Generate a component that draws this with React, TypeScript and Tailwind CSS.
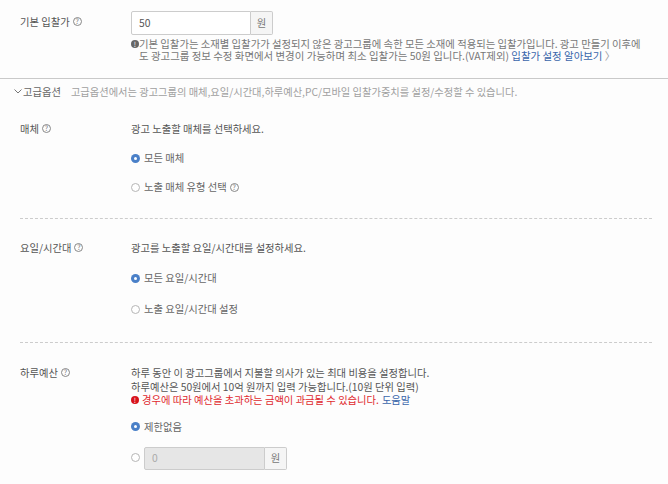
import React from 'react';

const Help = () => (
  <span className="inline-flex items-center justify-center w-[9px] h-[9px] rounded-full border border-[#888] text-[7px] leading-none text-[#777] ml-[3px] shrink-0">?</span>
);

const Radio = ({ checked, label, help }: { checked?: boolean; label?: string; help?: boolean }) => (
  <div className="flex items-center h-[16px]">
    {checked ? (
      <span className="w-[9px] h-[9px] rounded-full bg-[#4a80c8] flex items-center justify-center shrink-0">
        <span className="w-[3px] h-[3px] rounded-full bg-white" />
      </span>
    ) : (
      <span className="w-[9px] h-[9px] rounded-full border border-[#b5b5b5] bg-white shrink-0" />
    )}
    {label && <span className="ml-[4px] text-[#666]">{label}</span>}
    {help && <Help />}
  </div>
);

const Row = ({ label, children, className }: { label: string; children: React.ReactNode; className?: string }) => (
  <div className={`flex pl-[20px] ${className ?? ''}`}>
    <div className="w-[111px] flex items-center h-[15px] text-[#555]">
      <span>{label}</span>
      <Help />
    </div>
    <div className="flex-1">{children}</div>
  </div>
);

const UnitInput = ({ value, disabled, width, height }: { value: string; disabled?: boolean; width: string; height: string }) => (
  <div className={`flex ${height}`}>
    <div className={`${width} border border-[#ccc] rounded-l-[2px] pl-[7px] flex items-center ${disabled ? 'bg-[#e6e6e6] text-[#aaa]' : 'bg-white text-[#555]'}`}>
      {value}
    </div>
    <div className="w-[22px] border border-l-0 border-[#ccc] rounded-r-[2px] bg-[#f5f5f5] flex items-center justify-center text-[#777]">원</div>
  </div>
);

export default function App() {
  return (
    <div
      className="w-[668px] h-[484px] overflow-hidden bg-[#fdfdfd] text-[10.3px] leading-[12px] text-[#555]"
      style={{ fontFamily: '"Noto Sans CJK KR", "Noto Sans", sans-serif' }}
    >
      <Row label="기본 입찰가" className="pt-[14px]">
        <div className="-mt-[3px]">
          <UnitInput value="50" width="w-[120px]" height="h-[24px]" />
        </div>
        <div className="mt-[3px] text-[10.45px] leading-[12px] text-[#777] relative pl-[8px]">
          <span className="absolute left-0 top-[2px] w-[8px] h-[8px] rounded-full bg-[#666] text-white text-[7px] leading-[8px] text-center">!</span>
          <span className="text-[10.35px]">기본 입찰가는 소재별 입찰가가 설정되지 않은 광고그룹에 속한 모든 소재에 적용되는 입찰가입니다. 광고 만들기 이후에</span>
          <br />
          도 광고그룹 정보 수정 화면에서 변경이 가능하며 최소 입찰가는 50원 입니다.(VAT제외) <span className="text-[#3a66ab]">입찰가 설정 알아보기</span> <span className="text-[#999]">〉</span>
        </div>
      </Row>

      <div className="mt-[16px] border-t border-[#c9c9c9] h-[26px] pl-[14px] flex items-center text-[10.25px] text-[#a0a0a0]">
        <svg width="8" height="5" viewBox="0 0 8 5" className="mr-[1px]"><path d="M0.5 0.5 L4 4 L7.5 0.5" fill="none" stroke="#777" /></svg>
        <span className="text-[#666] mr-[10px] text-[10.3px]">고급옵션</span>
        고급옵션에서는 광고그룹의 매체,요일/시간대,하루예산,PC/모바일 입찰가중치를 설정/수정할 수 있습니다.
      </div>

      <Row label="매체" className="pt-[17px]">
        <div className="h-[16px] flex items-center text-[#555]">광고 노출할 매체를 선택하세요.</div>
        <div className="mt-[13px]"><Radio checked label="모든 매체" /></div>
        <div className="mt-[13px]"><Radio label="노출 매체 유형 선택" help /></div>
      </Row>

      <div className="ml-[20px] mr-[16px] mt-[23px] border-t border-dashed border-[#ccc]" />

      <Row label="요일/시간대" className="pt-[21px]">
        <div className="h-[16px] flex items-center text-[#555]">광고를 노출할 요일/시간대를 설정하세요.</div>
        <div className="mt-[14px]"><Radio checked label="모든 요일/시간대" /></div>
        <div className="mt-[15px]"><Radio label="노출 요일/시간대 설정" /></div>
      </Row>

      <div className="ml-[20px] mr-[16px] mt-[25px] border-t border-dashed border-[#ccc]" />

      <Row label="하루예산" className="pt-[22px]">
        <div className="mt-[1px] leading-[13.5px] text-[#555]">
          <div>하루 동안 이 광고그룹에서 지불할 의사가 있는 최대 비용을 설정합니다.</div>
          <div>하루예산은 50원에서 10억 원까지 입력 가능합니다.(10원 단위 입력)</div>
          <div className="flex items-center">
            <span className="w-[8px] h-[8px] rounded-full bg-[#d8121b] text-white text-[7px] leading-[8px] text-center mr-[3px]">!</span>
            <span className="text-[#e02a2f]">경우에 따라 예산을 초과하는 금액이 과금될 수 있습니다.</span>
            <span className="text-[#3a66ab] ml-[3px]">도움말</span>
          </div>
        </div>
        <div className="mt-[12px]"><Radio checked label="제한없음" /></div>
        <div className="mt-[12px] flex items-center">
          <div className="-mt-[2px]"><Radio /></div>
          <div className="ml-[4px]"><UnitInput value="0" disabled width="w-[121px]" height="h-[23px]" /></div>
        </div>
      </Row>
    </div>
  );
}
